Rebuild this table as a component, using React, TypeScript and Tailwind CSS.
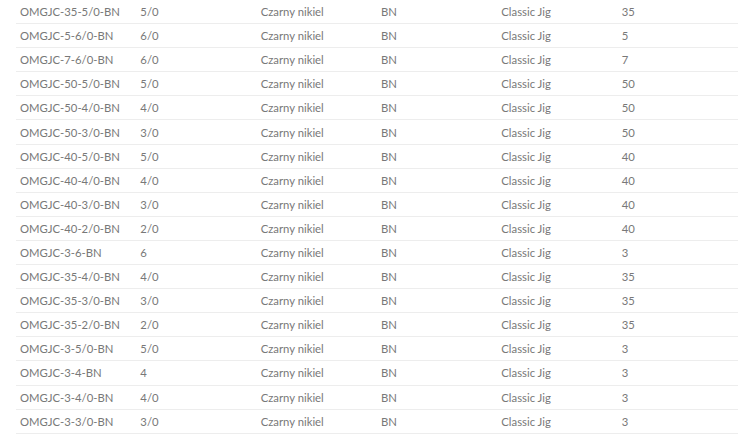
import React from 'react';

const rows: [string, string, string][] = [
  ['OMGJC-35-5/0-BN', '5/0', '35'],
  ['OMGJC-5-6/0-BN', '6/0', '5'],
  ['OMGJC-7-6/0-BN', '6/0', '7'],
  ['OMGJC-50-5/0-BN', '5/0', '50'],
  ['OMGJC-50-4/0-BN', '4/0', '50'],
  ['OMGJC-50-3/0-BN', '3/0', '50'],
  ['OMGJC-40-5/0-BN', '5/0', '40'],
  ['OMGJC-40-4/0-BN', '4/0', '40'],
  ['OMGJC-40-3/0-BN', '3/0', '40'],
  ['OMGJC-40-2/0-BN', '2/0', '40'],
  ['OMGJC-3-6-BN', '6', '3'],
  ['OMGJC-35-4/0-BN', '4/0', '35'],
  ['OMGJC-35-3/0-BN', '3/0', '35'],
  ['OMGJC-35-2/0-BN', '2/0', '35'],
  ['OMGJC-3-5/0-BN', '5/0', '3'],
  ['OMGJC-3-4-BN', '4', '3'],
  ['OMGJC-3-4/0-BN', '4/0', '3'],
  ['OMGJC-3-3/0-BN', '3/0', '3'],
];

export default function App() {
  return (
    <div className="w-[750px] h-[434px] overflow-hidden bg-white pl-4 pr-3 font-['Lato',sans-serif] text-[11.3px] text-[#787878]">
      {rows.map(([code, size, weight]) => (
        <div
          key={code}
          className="grid grid-cols-6 h-[24.1px] pt-[2px] items-center border-b border-[#ededed]"
        >
          <div className="pl-1">{code}</div>
          <div className="pl-1">{size}</div>
          <div className="pl-1">Czarny nikiel</div>
          <div className="pl-1">BN</div>
          <div className="pl-1">Classic Jig</div>
          <div className="pl-1">{weight}</div>
        </div>
      ))}
    </div>
  );
}
